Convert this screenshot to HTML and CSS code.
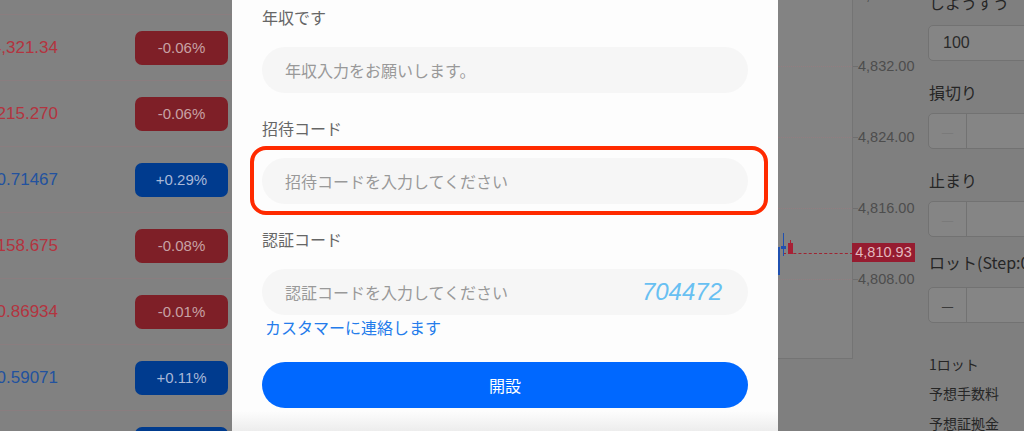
FILE: index.html
```html
<!DOCTYPE html>
<html lang="ja">
<head>
<meta charset="utf-8">
<title>開設</title>
<link rel="stylesheet" href="styles.css">
</head>
<body>
<div class="page">
  <div class="list">
    <div class="row-top"></div>
    <div class="row"><div class="price down"><span>4,321.34</span></div><div class="badge down">-0.06%</div></div>
    <div class="row"><div class="price down"><span>215.270</span></div><div class="badge down">-0.06%</div></div>
    <div class="row"><div class="price up"><span>0.71467</span></div><div class="badge up">+0.29%</div></div>
    <div class="row"><div class="price down"><span>158.675</span></div><div class="badge down">-0.08%</div></div>
    <div class="row"><div class="price down"><span>0.86934</span></div><div class="badge down">-0.01%</div></div>
    <div class="row"><div class="price up"><span>0.59071</span></div><div class="badge up">+0.11%</div></div>
    <div class="row"><div class="price up"><span>1.25430</span></div><div class="badge up">+0.05%</div></div>
  </div>
  <div class="hidden-area"></div>
  <div class="chart">
    <div class="plot"></div>
    <div class="grid g1"></div>
    <div class="grid g2"></div>
    <div class="grid g3"></div>
    <div class="grid g4"></div>
    <div class="tick t0"></div>
    <div class="tick t1"></div>
    <div class="tick t2"></div>
    <div class="tick t3"></div>
    <div class="tick t4"></div>
    <div class="axis-label l0">4,840.00</div>
    <div class="axis-label l1">4,832.00</div>
    <div class="axis-label l2">4,824.00</div>
    <div class="axis-label l3">4,816.00</div>
    <div class="axis-label l4">4,808.00</div>
    <div class="last-line"></div>
    <div class="last-tag">4,810.93</div>
    <div class="edge-bar"></div>
    <div class="wick blue-wick"></div>
    <div class="body blue-body"></div>
    <div class="wick red-wick"></div>
    <div class="body red-body"></div>
  </div>
  <div class="panel">
    <div class="p-label first">しようすう</div>
    <div class="p-input"><span>100</span></div>
    <div class="p-label gap20">損切り</div>
    <div class="p-stepper"><span class="minus faint">—</span></div>
    <div class="p-label gap20">止まり</div>
    <div class="p-stepper"><span class="minus faint">—</span></div>
    <div class="p-label gap14">ロット(Step:0.01)</div>
    <div class="p-stepper mt14"><span class="minus">—</span></div>
    <div class="p-small gap31">1ロット</div>
    <div class="p-small gap9">予想手数料</div>
    <div class="p-small gap10">予想証拠金</div>
  </div>
</div>

<div class="overlay">
  <div class="modal">
    <div class="label">年収です</div>
    <div class="field"><span class="ph">年収入力をお願いします。</span></div>
    <div class="label gap">招待コード</div>
    <div class="field marked"><span class="ph">招待コードを入力してください</span></div>
    <div class="label gap">認証コード</div>
    <div class="field code"><span class="ph">認証コードを入力してください</span><span class="captcha">704472</span></div>
    <div class="link">カスタマーに連絡します</div>
    <div class="submit">開設</div>
    <div class="sheet-bottom"></div>
  </div>
</div>
</body>
</html>
```

FILE: styles.css
```css
* { box-sizing: border-box; }
html, body { margin: 0; padding: 0; }
body {
  width: 1024px;
  height: 431px;
  overflow: hidden;
  background: #7f7f7f;
  font-family: "Noto Sans CJK JP", "Noto Sans", sans-serif;
  position: relative;
}

.page {
  display: flex;
  height: 431px;
}

/* list (dimmed) */
.list {
  width: 232px;
  flex: none;
  background: #818181;
}
.row-top {
  height: 15px;
  border-bottom: 1px solid #8a7d7f;
}
.row {
  height: 66px;
  border-bottom: 1px solid #8a7d7f;
  display: flex;
  align-items: center;
  justify-content: space-between;
  padding-right: 4px;
}
.price {
  width: 58px;
  display: flex;
  justify-content: flex-end;
  overflow: hidden;
  white-space: nowrap;
  font-family: "Liberation Sans", Arial, sans-serif;
  font-size: 17px;
}
.price.down { color: #b3343f; }
.price.up { color: #22529f; }
.badge {
  width: 93px;
  height: 34px;
  border-radius: 7px;
  display: flex;
  align-items: center;
  justify-content: center;
  font-family: "Liberation Sans", Arial, sans-serif;
  font-size: 15px;
}
.badge.down { background: #7e1f27; color: #c7a2a5; }
.badge.up { background: #003b8e; color: #a8b8d8; }

.hidden-area { width: 546px; flex: none; }

/* chart */
.chart {
  width: 142px;
  flex: none;
  position: relative;
}
.plot {
  position: absolute;
  left: 0; top: 0;
  width: 75px; height: 359px;
  background: #838383;
  border-right: 1px solid #747474;
  border-bottom: 1px solid #747474;
}
.grid {
  position: absolute;
  left: 0;
  width: 74px;
  border-top: 1px dotted #927d80;
}
.g1 { top: 66px; } .g2 { top: 137px; } .g3 { top: 208px; } .g4 { top: 279px; }
.tick {
  position: absolute;
  left: 75px;
  width: 5px;
  border-top: 1px solid #6f6f6f;
}
.t0 { top: -5px; } .t1 { top: 66px; } .t2 { top: 137px; } .t3 { top: 208px; } .t4 { top: 279px; }
.axis-label {
  position: absolute;
  left: 80px;
  font-family: "Liberation Sans", Arial, sans-serif;
  font-size: 14.5px;
  line-height: 18px;
  color: #4d4d4d;
}
.l0 { top: -14px; } .l1 { top: 57px; } .l2 { top: 128px; } .l3 { top: 199px; } .l4 { top: 270px; }
.last-line {
  position: absolute;
  left: 5px; top: 253px;
  width: 70px;
  border-top: 1px dashed #9e2533;
}
.last-tag {
  position: absolute;
  left: 74px; top: 243px;
  width: 63px; height: 19px;
  background: #961c30;
  color: #e3b8bf;
  font-family: "Liberation Sans", Arial, sans-serif;
  font-size: 14.5px;
  line-height: 19px;
  text-align: center;
}
.edge-bar {
  position: absolute;
  left: 0; top: 247px;
  width: 2px; height: 28px;
  background: #1f50b0;
}
.wick { position: absolute; width: 1px; }
.body { position: absolute; }
.blue-wick { left: 5px; top: 233px; height: 23px; background: #1f50b0; }
.blue-body { left: 3px; top: 246px; width: 5px; height: 3px; background: #1f50b0; }
.red-wick { left: 12px; top: 240px; height: 14px; background: #a82035; }
.red-body { left: 10px; top: 243px; width: 5px; height: 11px; background: #a82035; }

/* right panel */
.panel {
  flex: 1;
  padding-left: 8px;
  overflow: hidden;
  white-space: nowrap;
}
.p-label {
  font-size: 16px;
  line-height: 22px;
  color: #262626;
  padding-left: 1px;
}
.p-label.first { margin-top: -9px; }
.p-input, .p-stepper {
  margin-top: 12px;
  width: 110px;
  height: 36px;
  border: 1px solid #727272;
  border-radius: 5px;
  background: #858585;
  display: flex;
  align-items: center;
}
.p-input span {
  padding-left: 14px;
  font-family: "Liberation Sans", Arial, sans-serif;
  font-size: 16px;
  color: #2a2a2a;
}
.p-stepper { margin-top: 10px; }
.p-stepper.mt14 { margin-top: 14px; }
.minus {
  width: 38px;
  height: 100%;
  border-right: 1px solid #727272;
  display: flex;
  align-items: center;
  justify-content: center;
  font-size: 14px;
  color: #3a3a3a;
}
.minus.faint { color: #7a7a7a; }
.gap20 { margin-top: 20px; }
.gap14 { margin-top: 14px; }
.p-small {
  font-size: 14px;
  line-height: 20px;
  color: #262626;
  padding-left: 1px;
}
.gap31 { margin-top: 31px; }
.gap9 { margin-top: 9px; }
.gap10 { margin-top: 10px; }

/* modal */
.overlay {
  position: absolute;
  left: 0; top: 0;
  width: 1024px; height: 431px;
}
.modal {
  position: absolute;
  left: 232px; top: 0;
  width: 546px; height: 431px;
  background: #fdfdfd;
  padding: 6px 30px 0;
  overflow: hidden;
  display: flex;
  flex-direction: column;
}
.label {
  font-size: 16px;
  line-height: 22px;
  color: #666;
}
.label.gap { margin-top: 24px; }
.field {
  margin-top: 19px;
  height: 46px;
  border-radius: 23px;
  background: #f6f6f6;
  display: flex;
  align-items: center;
  justify-content: space-between;
  padding: 0 26px 0 23px;
  position: relative;
  flex: none;
}
.ph {
  font-size: 16px;
  color: #999;
}
.field.marked::after {
  content: "";
  position: absolute;
  left: -12px; right: -20px; top: -12px; bottom: -11px;
  border: 4px solid #ff2a00;
  border-radius: 16px;
}
.captcha {
  font-family: "Liberation Sans", Arial, sans-serif;
  font-style: italic;
  font-size: 24px;
  color: #68c0f2;
}
.link {
  margin-top: 1px;
  padding-left: 3px;
  font-size: 16px;
  line-height: 22px;
  color: #247ceb;
}
.submit {
  margin-top: 24px;
  height: 46px;
  border-radius: 23px;
  background: #0068ff;
  color: #fff;
  font-size: 16px;
  display: flex;
  align-items: center;
  justify-content: center;
  flex: none;
}
.sheet-bottom {
  margin: 3px -30px 0;
  height: 30px;
  flex: none;
  background: linear-gradient(#fdfdfd, #ececec 70%);
}
```
